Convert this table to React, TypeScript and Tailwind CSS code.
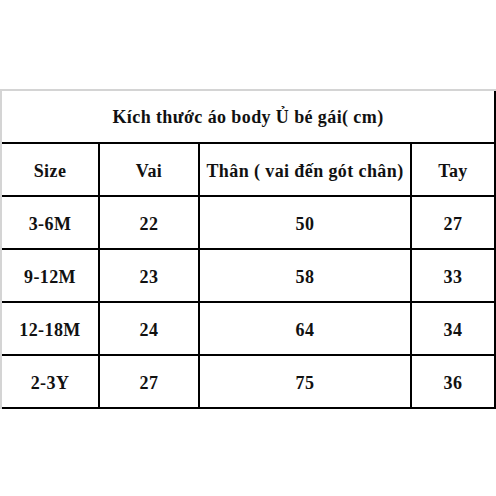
const HEADERS = ["Size", "Vai", "Thân ( vai đến gót chân)", "Tay"];

const ROWS: [string, string, string, string][] = [
  ["3-6M", "22", "50", "27"],
  ["9-12M", "23", "58", "33"],
  ["12-18M", "24", "64", "34"],
  ["2-3Y", "27", "75", "36"],
];

function Cell({ children }: { children: React.ReactNode }) {
  return (
    <div className="flex h-[53px] items-center justify-center border-r-2 border-b-2 border-black pt-[3px]">
      {children}
    </div>
  );
}

export default function App() {
  return (
    <div className="h-[496px] w-[496px] bg-white pt-[89px] font-['Liberation_Serif','Times_New_Roman',serif] text-[18px] font-bold tracking-[0.4px] text-[#111]">
      <div className="w-[496px] border-t-2 border-l-2 border-t-[#d4d4d4] border-l-[#d4d4d4]">
        <div className="flex h-[53px] items-center justify-center border-r-2 border-b-2 border-black pt-[2px]">
          Kích thước áo body Ủ bé gái( cm)
        </div>
        <div className="grid grid-cols-[98px_100px_212px_84px]">
          {HEADERS.map((h) => (
            <Cell key={h}>{h}</Cell>
          ))}
          {ROWS.map((row) =>
            row.map((v, i) => <Cell key={row[0] + i}>{v}</Cell>)
          )}
        </div>
      </div>
    </div>
  );
}
